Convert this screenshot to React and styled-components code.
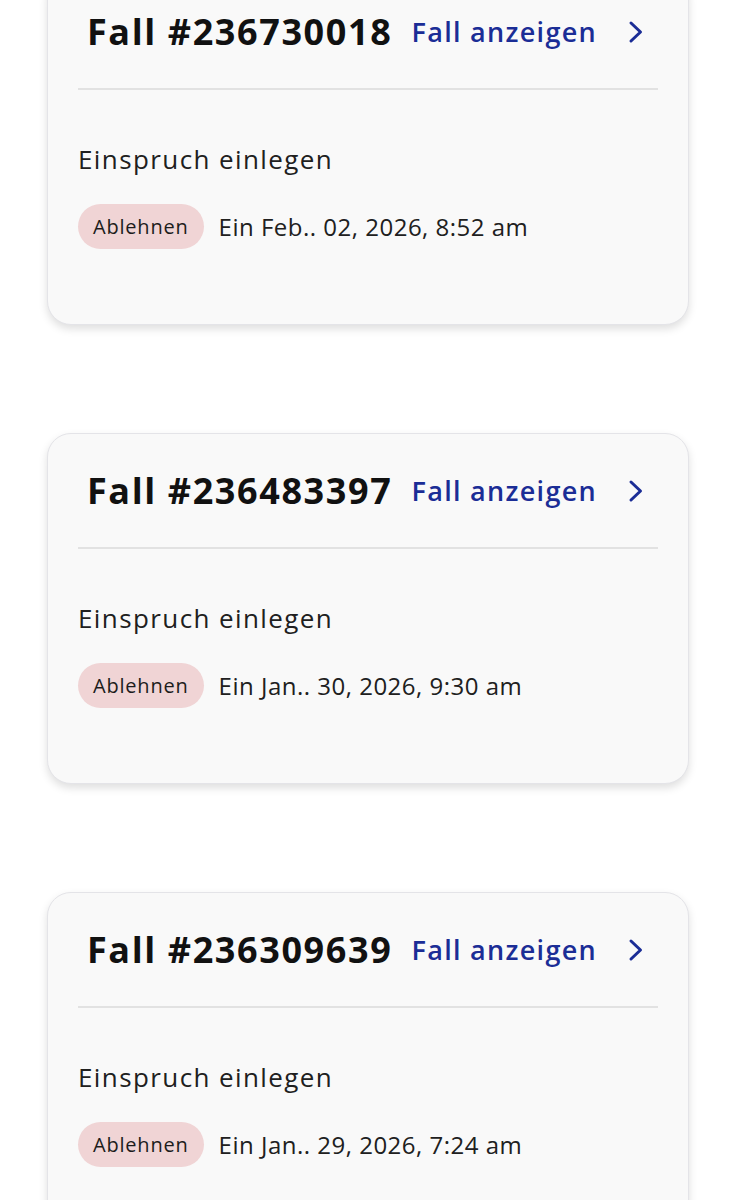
import React from "react";
import styled, { createGlobalStyle } from "styled-components";

const GlobalStyle = createGlobalStyle`
  html, body {
    margin: 0;
    padding: 0;
    background: #ffffff;
    font-family: "Open Sans", "Liberation Sans", sans-serif;
    overflow: hidden;
  }
`;

const cases = [
  { id: "236730018", date: "Ein Feb.. 02, 2026, 8:52 am" },
  { id: "236483397", date: "Ein Jan.. 30, 2026, 9:30 am" },
  { id: "236309639", date: "Ein Jan.. 29, 2026, 7:24 am" },
];

function Chevron() {
  return (
    <svg width="20" height="24" viewBox="0 0 20 24" fill="none">
      <path
        d="M5 3 L14.5 12 L5 21"
        stroke="#1b2d96"
        strokeWidth="3"
        strokeLinecap="round"
        strokeLinejoin="round"
      />
    </svg>
  );
}

function CaseCard({ id, date }) {
  return (
    <Card>
      <Header>
        <Title>Fall #{id}</Title>
        <ViewLink>
          Fall anzeigen
          <Chevron />
        </ViewLink>
      </Header>
      <Body>
        <Action>Einspruch einlegen</Action>
        <StatusRow>
          <Badge>Ablehnen</Badge>
          <DateText>{date}</DateText>
        </StatusRow>
      </Body>
    </Card>
  );
}

export default function App() {
  return (
    <>
      <GlobalStyle />
      <List>
        {cases.map((c) => (
          <CaseCard key={c.id} {...c} />
        ))}
      </List>
    </>
  );
}

const List = styled.div`
  display: flex;
  flex-direction: column;
  gap: 108px;
  margin-top: -26px;
  padding: 0 47px;
`;

const Card = styled.div`
  height: 351px;
  box-sizing: border-box;
  background: #f9f9f9;
  border: 1.5px solid #e4e4e8;
  border-radius: 24px;
  box-shadow: 0 4px 8px rgba(0, 0, 0, 0.13);
  padding: 0 30px;
  display: flex;
  flex-direction: column;
`;

const Header = styled.div`
  height: 113px;
  display: flex;
  align-items: center;
  justify-content: space-between;
  padding: 0 12px 0 9px;
  border-bottom: 2px solid #e2e2e2;
`;

const Title = styled.div`
  font-size: 36px;
  font-weight: 700;
  color: #111111;
  letter-spacing: 1.6px;
`;

const ViewLink = styled.div`
  display: flex;
  align-items: center;
  gap: 29px;
  font-size: 27px;
  font-weight: 600;
  color: #1b2d96;
  letter-spacing: 1.3px;
`;

const Body = styled.div`
  display: flex;
  flex-direction: column;
  padding-top: 51px;
  gap: 27px;
`;

const Action = styled.div`
  font-size: 26px;
  color: #202020;
  line-height: 36px;
  letter-spacing: 1.4px;
`;

const StatusRow = styled.div`
  display: flex;
  align-items: center;
  gap: 15px;
`;

const Badge = styled.span`
  display: inline-flex;
  align-items: center;
  height: 45px;
  padding: 0 15px;
  border-radius: 23px;
  background: #f0d4d5;
  color: #1c1c1c;
  font-size: 20px;
  letter-spacing: 0.8px;
`;

const DateText = styled.span`
  font-size: 24px;
  color: #202020;
  letter-spacing: 0.5px;
`;
